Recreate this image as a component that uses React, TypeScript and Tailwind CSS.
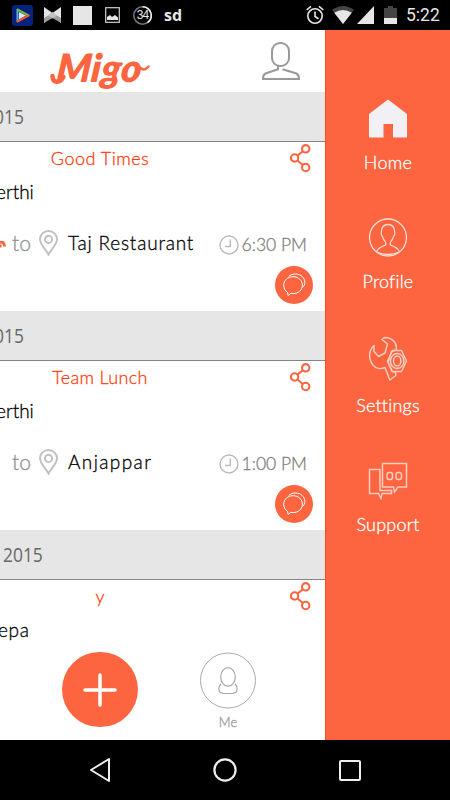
import type { ReactNode } from "react";

const ORANGE = "#fd6541";

function StatusBar() {
  return (
    <div className="flex h-[30px] items-center bg-black pl-3 pr-[10px] text-[#e6e6e6] [-webkit-text-stroke:0]">
      <svg width="21" height="21" viewBox="0 0 21 21">
        <rect width="21" height="21" rx="3" fill="#03237c" />
        <path d="M7 7l7 3.500L7 14.500z" fill="#dce9ee" />
        <path d="M5.500 4.500v12" stroke="#5db4e8" strokeWidth="2" />
        <path d="M5.500 4.500l11 6" stroke="#7ab648" strokeWidth="2" strokeLinecap="round" />
        <path d="M16.500 10.500l-11 6" stroke="#ef5a28" strokeWidth="2" strokeLinecap="round" />
      </svg>
      <svg className="ml-[11px]" width="17" height="16" viewBox="0 0 17 16">
        <path d="M0 0l8.500 6L0 16z" fill="#e4e4e4" />
        <path d="M17 0L8.500 6 17 16z" fill="#e4e4e4" />
        <path d="M0 16V11l8.500-5 8.500 5v5l-8.500-5z" fill="#9d9d9d" />
        <path d="M4 8.500L8.500 5l4.500 3.500-4.500 3z" fill="#c2c2c2" />
      </svg>
      <div className="ml-3 h-[19px] w-[19px] bg-[#e6e6e6]" />
      <svg className="ml-[13px]" width="15" height="16" viewBox="0 0 15 16">
        <rect x=".7" y=".7" width="13.600" height="14.600" fill="none" stroke="#d0d0d0" strokeWidth="1.200" />
        <path d="M2 13V10l3-2 2 2 3-2 3 2.500V13z" fill="#e6e6e6" />
      </svg>
      <div className="relative ml-[13px] flex h-[19px] w-[19px] items-center justify-center">
        <svg className="absolute inset-0" width="19" height="19" viewBox="0 0 19 19" fill="none" strokeWidth="1.500">
          <circle cx="9.500" cy="9.500" r="8.700" stroke="#777" />
          <path d="M9.500.8a8.700 8.700 0 0 1 5 15.800" stroke="#f0f0f0" />
        </svg>
        <span className="font-['Liberation_Sans'] text-[12px] leading-none tracking-[-1px]">34</span>
      </div>
      <span className="ml-3 font-['Open_Sans'] text-[16px] font-bold leading-none">sd</span>

      <svg className="ml-auto" width="18" height="20" viewBox="0 0 18 20" fill="none" stroke="currentColor" strokeWidth="1.600">
        <circle cx="9" cy="11" r="7.200" />
        <path d="M9 6.500V11.500l3.500 2.200M.6 5L5 1.300M17.400 5L13 1.300" />
      </svg>
      <svg className="ml-2" width="22" height="18" viewBox="0 0 22 18">
        <path d="M0 3.800Q11-3.800 22 3.800L11 18z" fill="#444" />
        <path d="M2.200 6.700Q11 1.500 19.800 6.700L11 18z" fill="#e6e6e6" />
      </svg>
      <svg className="ml-[3px]" width="17" height="18" viewBox="0 0 17 18">
        <path d="M17 0v18H0z" fill="#e6e6e6" />
      </svg>
      <svg className="ml-[10px]" width="13" height="18" viewBox="0 0 13 18">
        <path d="M4 0h5v2h4v10H0V2h4z" fill="#444" />
        <path d="M0 12h13v6H0z" fill="#e6e6e6" />
      </svg>
      <span className="ml-[9px] w-[34px] whitespace-nowrap pt-[2px] font-['Roboto'] text-[17.500px] font-normal leading-none">
        5:22
      </span>
    </div>
  );
}

function ShareIcon() {
  return (
    <svg className="absolute left-[290px] top-[2px]" width="22" height="29" viewBox="0 0 22 29" fill="none" stroke={ORANGE} strokeWidth="2.100">
      <circle cx="15.700" cy="4.800" r="3.700" />
      <circle cx="4.600" cy="14" r="3.700" />
      <circle cx="15.700" cy="23.500" r="3.700" />
      <path d="M7.500 11.600l5.300-4.400M7.500 16.500l5.300 4.500" />
    </svg>
  );
}

function PinIcon() {
  return (
    <svg className="mr-[10px]" width="19" height="26" viewBox="0 0 19 26" fill="none" stroke="#c0c0c0" strokeWidth="1.900">
      <path d="M9.500 24.500C7.500 20 1 15 1 9.300a8.500 8.300 0 0 1 17 0C18 15 11.500 20 9.500 24.500z" />
      <circle cx="9.500" cy="9.400" r="3.600" />
    </svg>
  );
}

function ClockIcon() {
  return (
    <svg width="20" height="20" viewBox="0 0 20 20" fill="none" stroke="#bbb">
      <circle cx="10" cy="10" r="9" strokeWidth="1.400" />
      <path d="M11.300 4.500v7H6" strokeWidth="1.500" />
    </svg>
  );
}

function ChatButton() {
  return (
    <button aria-label="Chat" className="ml-[275px] mt-[9px] h-[38px] w-[38px] rounded-full bg-[#fd6541]">
      <svg width="38" height="38" viewBox="0 0 38 38" fill="none" stroke="#fff" strokeWidth="1">
        <path d="M12.500 26.300C10 24.700 8.700 22 8.700 19.200c0-4.800 4.200-8.500 9.400-8.500s9.300 3.700 9.300 8.500-4.100 8.400-9.300 8.400c-.8 0-1.500-.1-2.200-.3L13.200 29.500z" />
        <path d="M13.800 10.300C15.500 8.800 18 8 20.500 8c5.300 0 9.300 3.700 9.300 8.300 0 2-.7 3.700-2 5" />
      </svg>
    </button>
  );
}

type Meeting = {
  date: string;
  dateClass: string;
  title: string;
  titleClass: string;
  name: string;
  nameClass: string;
  place?: string;
  placeClass?: string;
  time?: string;
  moving?: boolean;
};

const meetings: Meeting[] = [
  {
    date: "015",
    dateClass: "-ml-[6px]",
    title: "Good Times",
    titleClass: "tracking-[0.5px]",
    name: "erthi",
    nameClass: "-ml-[4px]",
    place: "Taj Restaurant",
    placeClass: "tracking-[0.8px]",
    time: "6:30 PM",
    moving: true,
  },
  {
    date: "015",
    dateClass: "-ml-[6px]",
    title: "Team Lunch",
    titleClass: "tracking-[0.3px]",
    name: "erthi",
    nameClass: "-ml-[4px]",
    place: "Anjappar",
    placeClass: "tracking-[1.4px]",
    time: "1:00 PM",
  },
  {
    date: "2015",
    dateClass: "ml-[3px]",
    title: "y",
    titleClass: "",
    name: "epa",
    nameClass: "-ml-[2px] tracking-[0.7px]",
  },
];

function MeetingCard({ meeting }: { meeting: Meeting }) {
  return (
    <section className="h-[219px] shrink-0">
      <div className="flex h-[50px] items-center border-b border-[#858585] bg-[#e6e6e6] font-['Open_Sans'] text-[20px] font-normal text-[#666] [-webkit-text-stroke:0]">
        <span className={`${meeting.dateClass} origin-left scale-x-[0.87]`}>{meeting.date}</span>
      </div>
      <div className="relative">
        <h2 className={`w-[200px] pt-[4px] text-center text-[18px] leading-6 text-[#ff3d0c] ${meeting.titleClass}`}>
          {meeting.title}
        </h2>
        <ShareIcon />
        <p className={`pt-[10px] text-[19px] leading-6 text-black ${meeting.nameClass}`}>{meeting.name}</p>
        {meeting.place && (
          <>
            <div className="mt-[25px] flex h-[28px] items-center">
              <div className="w-[12px] shrink-0">
                {meeting.moving && (
                  <svg width="6" height="28" viewBox="0 0 6 28">
                    <path d="M0 13.500c2.500-1 4.300.2 4.500 4M0 17h1.500" fill="none" stroke={ORANGE} strokeWidth="3" />
                  </svg>
                )}
              </div>
              <span className="w-[27px] text-[21px] text-[#909090]">to</span>
              <PinIcon />
              <span className={`text-[19px] text-black ${meeting.placeClass}`}>{meeting.place}</span>
              <div className="ml-auto mr-[18px] flex items-center gap-[3px] pt-[3px] text-[#808080]">
                <ClockIcon />
                <span className="whitespace-nowrap text-[17.500px] leading-5">{meeting.time}</span>
              </div>
            </div>
            <ChatButton />
          </>
        )}
      </div>
    </section>
  );
}

function Header() {
  return (
    <header className="flex h-[62px] shrink-0 items-start justify-between bg-white pl-[50px] pr-[24px]">
      <div className="relative mt-[15px] w-[100px]">
        <h1 className="ml-[7px] -skew-x-6 text-[39px] font-extrabold italic leading-[44px] text-[#fd6541] [-webkit-text-stroke:0]">
          Migo
        </h1>
        {/* swashes at both ends of the wordmark */}
        <svg className="absolute left-0 top-0" width="100" height="44" viewBox="0 0 100 44" fill="none" stroke={ORANGE} strokeLinecap="round">
          <path d="M2.500 31c0 7 7 8 11 1" strokeWidth="4.500" />
          <path d="M89 22c4 4 7 2.500 9.500-.5" strokeWidth="2.500" />
        </svg>
      </div>
      <svg className="mt-[11px]" width="40" height="40" viewBox="0 0 40 40" fill="none" stroke="#999" strokeWidth="2">
        <rect x="11" y="2" width="17" height="23" rx="8" />
        <path d="M17 25v3.300L4.500 32.500C2.500 33.500 2 34.500 2 38h36c0-3.500-.5-4.500-2.500-5.500L21.500 28.300" />
      </svg>
    </header>
  );
}

function BottomActions() {
  return (
    <div className="absolute bottom-0 left-0 flex items-start pl-[62px]">
      <button aria-label="Add" className="flex h-[75px] w-[76px] items-center justify-center rounded-full bg-[#fd6541]">
        <svg width="34" height="34" viewBox="0 0 34 34" stroke="#fff" strokeWidth="3.500" strokeLinecap="round">
          <path d="M17 2v30M2 17h30" />
        </svg>
      </button>
      <button aria-label="Me" className="ml-[62px] flex h-[88px] w-14 flex-col items-center text-[#999]">
        <svg width="56" height="57" viewBox="0 0 56 57" fill="none" stroke="#aaa">
          <circle cx="28" cy="28.500" r="27.500" />
          <ellipse cx="28" cy="25" rx="7.300" ry="9.300" strokeWidth="1.200" />
          <path d="M21 32c-3 2.500-3.500 9.500 3 9.500h8c6.500 0 6-7 3-9.500" strokeWidth="1.200" />
        </svg>
        <span className="mt-[3px] text-[13px] leading-5 text-[#999]">Me</span>
      </button>
    </div>
  );
}

function MenuItem({ label, className, children }: { label: string; className: string; children: ReactNode }) {
  return (
    <li className={`flex flex-col items-center ${className}`}>
      {children}
      <span className="text-[18px] leading-6 text-white">{label}</span>
    </li>
  );
}

function SideMenu() {
  return (
    <ul className="w-[125px] border-l border-[#ff4a1c] bg-[#fd6541] pt-[69px]">
      <MenuItem label="Home" className="h-[118px] gap-[12px] tracking-[0.3px]">
        <svg width="38" height="39" viewBox="0 0 38 39">
          <path d="M19 .5L38 15v23.500H24V25H14.500v13.500H0V15z" fill="#f0f0f5" />
        </svg>
      </MenuItem>
      <MenuItem label="Profile" className="h-[119px] gap-[12px] tracking-[0.2px]">
        <svg width="40" height="40" viewBox="0 0 40 40" fill="none" stroke="#fddcd2" strokeWidth="1.300">
          <circle cx="20" cy="20.500" r="18.500" />
          <path d="M8.500 35c1-4 5-5 8-6.500 2-1 1.600-2.500.3-4.500-1.300-1.500-2-3.500-2.600-5-1.200-.7-1.200-2.200-.9-4 .2-5 2.700-7.500 6.700-7.500s6.500 2.500 6.700 7.500c.3 1.800.3 3.300-.9 4-.6 1.500-1.300 3.500-2.600 5-1.300 2-1.700 3.500.3 4.500 3 1.500 7 2.500 8 6.500M8.500 35q11.500 5 23 0" />
        </svg>
      </MenuItem>
      <MenuItem label="Settings" className="h-[126px] gap-[12px] tracking-[0.2px]">
        <svg width="40" height="45" viewBox="0 0 40 45" fill="none" stroke="#fdcdbf" strokeWidth="1.500" strokeLinejoin="round">
          <path d="M6 9.500C1 14 0 22 4.500 28.500c3 4 8 5 12.500 3l4.800 12.500 6-4.500-.3-3.500-3.500-.5-4-9 3.500-11 4.500-1.500c1.500-7-3.500-12.500-11.500-12.500L14 3.500l5.500 4.500-2.500 9-6.500 3.500-4.500-5z" />
          <path d="M24.500 14.500h9L38.500 25l-5 10.500h-9L19.500 25z" />
          <ellipse cx="29.200" cy="25" rx="6.800" ry="7.600" />
          <ellipse cx="29.200" cy="25" rx="3.700" ry="5" />
        </svg>
      </MenuItem>
      <MenuItem label="Support" className="gap-[12px] tracking-[0.2px]">
        <svg width="40" height="38" viewBox="0 0 40 38" fill="none" stroke="#fdcdbf" strokeWidth="1.500">
          <path d="M14.500 1.500h24V25h-8.500l-3.500 5L25.500 25h-11z" />
          <path d="M12 7.500H1.500v24h9l2.500 5 1-5h9.500v-3H12z" />
          <rect x="19" y="10.500" width="5.500" height="7" rx="2.200" />
          <rect x="28" y="10.500" width="5.500" height="7" rx="2.200" />
        </svg>
      </MenuItem>
    </ul>
  );
}

function NavigationBar() {
  return (
    <div className="flex h-[60px] items-center bg-black pl-[89px]">
      <svg width="22" height="24" viewBox="0 0 22 24" fill="none" stroke="#eee" strokeWidth="2" strokeLinejoin="round">
        <path d="M20 1v22L2 12z" />
      </svg>
      <svg className="ml-[102px]" width="24" height="24" viewBox="0 0 24 24" fill="none" stroke="#eee" strokeWidth="2.200">
        <circle cx="12" cy="12" r="10.600" />
      </svg>
      <div className="ml-[102px] h-[21px] w-[22px] rounded-[2px] border-2 border-[#eee]" />
    </div>
  );
}

export default function App() {
  return (
    <div className="flex h-[800px] w-[450px] flex-col overflow-hidden bg-white font-['Lato',sans-serif] font-light [-webkit-text-stroke:0.3px]">
      <StatusBar />
      <div className="flex h-[710px]">
        <main className="relative flex w-[325px] flex-col overflow-hidden">
          <Header />
          {meetings.map((meeting) => (
            <MeetingCard key={meeting.title} meeting={meeting} />
          ))}
          <BottomActions />
        </main>
        <SideMenu />
      </div>
      <NavigationBar />
    </div>
  );
}
